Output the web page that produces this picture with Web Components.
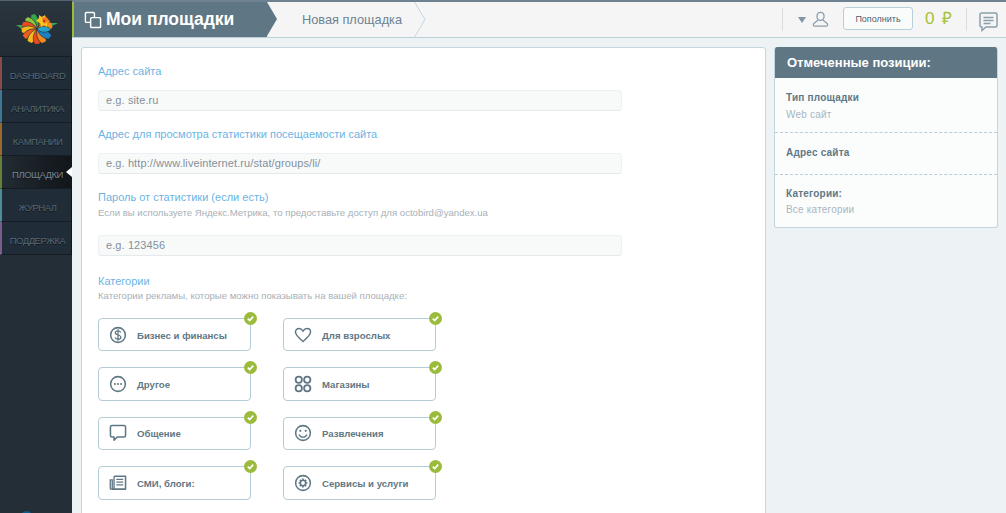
<!DOCTYPE html>
<html><head><meta charset="utf-8">
<style>
html,body{margin:0;padding:0;height:513px;overflow:hidden;background:#edf2f5;font-family:"Liberation Sans",Arial,sans-serif}
</style></head><body>
<app-shell>
 <side-nav slot="nav">
  <nav-item c="#8a4a45">DASHBOARD</nav-item>
  <nav-item c="#3f7794">АНАЛИТИКА</nav-item>
  <nav-item c="#9a6a2c">КАМПАНИИ</nav-item>
  <nav-item c="#65803a" active>ПЛОЩАДКИ</nav-item>
  <nav-item c="#4f8e99">ЖУРНАЛ</nav-item>
  <nav-item c="#7a5f8e">ПОДДЕРЖКА</nav-item>
 </side-nav>
 <top-bar slot="top"></top-bar>
 <form-card slot="main">
  <form-field label="Адрес сайта" ph="e.g. site.ru" g="12"></form-field>
  <form-field label="Адрес для просмотра статистики посещаемости сайта" ph="e.g. http://www.liveinternet.ru/stat/groups/li/" g="12" t="16"></form-field>
  <form-field label="Пароль от статистики (если есть)" hint="Если вы используете Яндекс.Метрика, то предоставьте доступ для octobird@yandex.ua" ph="e.g. 123456" g="16" t="16"></form-field>
  <form-field label="Категории" hint="Категории рекламы, которые можно показывать на вашей площадке:" t="18" hm="2"></form-field>
  <cat-grid>
   <cat-card icon="dollar">Бизнес и финансы</cat-card>
   <cat-card icon="heart">Для взрослых</cat-card>
   <cat-card icon="dots">Другое</cat-card>
   <cat-card icon="rings">Магазины</cat-card>
   <cat-card icon="chat">Общение</cat-card>
   <cat-card icon="smile">Развлечения</cat-card>
   <cat-card icon="news">СМИ, блоги:</cat-card>
   <cat-card icon="gear">Сервисы и услуги</cat-card>
  </cat-grid>
 </form-card>
 <side-panel slot="aside">
  <panel-row title="Тип площадки" value="Web сайт" h="55" p="14"></panel-row>
  <panel-row title="Адрес сайта" h="42" p="14"></panel-row>
  <panel-row title="Категории:" value="Все категории" h="53" p="13" last></panel-row>
 </side-panel>
</app-shell>
<script>
const def=(n,html)=>customElements.define(n,class extends HTMLElement{
 connectedCallback(){ if(this.shadowRoot) return; const r=this.attachShadow({mode:'open'}); r.innerHTML=typeof html==='function'?html(this):html; }
});
const ICONS={
 dollar:'<circle cx="10" cy="10" r="8.2" fill="none" stroke="#5f7784" stroke-width="1.7"/><path d="M13 7.2C12.5 5.8 11.3 5.3 10 5.3 8.2 5.3 7 6.2 7 7.6c0 3.2 6.2 1.6 6.2 4.9 0 1.4-1.4 2.3-3.2 2.3-1.6 0-2.9-.7-3.3-2.1M10 3.6v12.8" fill="none" stroke="#5f7784" stroke-width="1.4"/>',
 heart:'<path d="M10 17.2C5 13 1.6 10.3 1.6 6.8 1.6 4.4 3.4 2.8 5.5 2.8 7.4 2.8 9 3.9 10 5.6 11 3.9 12.6 2.8 14.5 2.8c2.1 0 3.9 1.6 3.9 4 0 3.5-3.4 6.2-8.4 10.4z" fill="none" stroke="#5f7784" stroke-width="1.6"/>',
 dots:'<circle cx="10" cy="10" r="8.2" fill="none" stroke="#5f7784" stroke-width="1.7"/><circle cx="6.6" cy="10" r="1.1" fill="#5f7784"/><circle cx="10" cy="10" r="1.1" fill="#5f7784"/><circle cx="13.4" cy="10" r="1.1" fill="#5f7784"/>',
 rings:'<g fill="none" stroke="#5f7784" stroke-width="2"><circle cx="5.3" cy="5.3" r="3.5"/><circle cx="14.7" cy="5.3" r="3.5"/><circle cx="5.3" cy="14.7" r="3.5"/><circle cx="14.7" cy="14.7" r="3.5"/></g>',
 chat:'<path d="M3.2 1.6h13.6c1 0 1.6.7 1.6 1.6v9.6c0 1-.7 1.6-1.6 1.6H9.2L5.6 18v-3.6H3.2c-1 0-1.6-.7-1.6-1.6V3.2c0-1 .7-1.6 1.6-1.6z" fill="none" stroke="#5f7784" stroke-width="1.7" stroke-linejoin="round"/>',
 smile:'<circle cx="10" cy="10" r="8.2" fill="none" stroke="#5f7784" stroke-width="1.7"/><circle cx="7" cy="7.6" r="1.2" fill="#5f7784"/><circle cx="13" cy="7.6" r="1.2" fill="#5f7784"/><path d="M5.6 11.6c.8 2 2.4 3 4.4 3s3.6-1 4.4-3" fill="none" stroke="#5f7784" stroke-width="1.5"/>',
 news:'<path d="M5.6 2.4h12.8v14.4H3.2" fill="none" stroke="#5f7784" stroke-width="1.7" stroke-linejoin="round"/><path d="M5.6 2.4v14.4M1.4 6.6h2.2v10.2H2.4c-.6 0-1-.4-1-1z" fill="none" stroke="#5f7784" stroke-width="1.5"/><path d="M8.2 6h7.6M8.2 9h7.6M8.2 12h7.6" stroke="#5f7784" stroke-width="1.4"/>',
 gear:'<circle cx="10" cy="10" r="8.2" fill="none" stroke="#5f7784" stroke-width="1.7"/><circle cx="10" cy="10" r="3" fill="none" stroke="#5f7784" stroke-width="1.8"/><path d="M10 5v1.6M10 13.4V15M5 10h1.6M13.4 10H15M6.5 6.5l1.1 1.1M12.4 12.4l1.1 1.1M13.5 6.5l-1.1 1.1M7.6 12.4l-1.1 1.1" stroke="#5f7784" stroke-width="1.8"/>'
};
const leaf=(a,c,l=19,w=6)=>`<path transform="translate(21 16) rotate(${a})" d="M0 0C${w} -${l*.3} ${w} -${l*.7} 0 -${l}C-${w} -${l*.7} -${w} -${l*.3} 0 0z" fill="${c}" stroke="#232e37" stroke-width=".6"/>`;
def('app-shell',`<style>:host{display:grid;grid-template-columns:72px 1fr 232px;grid-template-rows:38px 475px;width:1006px;height:513px;overflow:hidden}
 ::slotted([slot=nav]){grid-row:1/3;grid-column:1}::slotted([slot=top]){grid-column:2/4;grid-row:1}
 ::slotted([slot=main]){grid-column:2;grid-row:2;margin:9px 8px 0 9px}::slotted([slot=aside]){grid-column:3;grid-row:2;margin:9px 8px 0 0}</style>
 <slot name="nav"></slot><slot name="top"></slot><slot name="main"></slot><slot name="aside"></slot>`);
def('side-nav',`<style>:host{display:block;background:#232e37;position:relative;height:513px;border-top:1px solid #55636e;box-sizing:border-box}
 .logo{height:56px;display:flex;align-items:center;justify-content:center;background:linear-gradient(#2a353e,#222c35);border-bottom:1px solid #151c22;box-sizing:border-box}
 .list{display:flex;flex-direction:column;border-right:1px solid #11171c}
 .blip{position:absolute;left:20px;top:510px;width:13px;height:13px;border-radius:50%;background:#0c5c8e}</style>
 <div class="logo"><svg width="42" height="32" viewBox="0 0 42 32" style="margin-left:1px">
  <defs><clipPath id="r"><ellipse cx="21" cy="16" rx="15.500" ry="15"/></clipPath></defs>
  <path d="M0 12h9l-3 4zM42 10H31l3 4z" fill="#3aa655"/>
  <g clip-path="url(#r)">
   ${leaf(40,'#e9491f')}${leaf(75,'#f28a1c')}${leaf(-15,'#35a64a',18,5)}${leaf(-45,'#8ec63f',18,5)}
   ${leaf(-70,'#e9491f',19,5)}${leaf(-95,'#f2b81c',19,5)}${leaf(-122,'#ee5a24',19,5)}
   ${leaf(-150,'#f2b81c',19,5)}${leaf(180,'#e9491f',19,5)}${leaf(152,'#f28a1c',19,5)}
   ${leaf(122,'#1e7fc2',19,5)}${leaf(92,'#29a4c9',14,4)}
  </g>
  <path d="M23 2l3 2 3-2 1 4 4 2-3 2 0 4-3-2-3 2-1-4-4-2 3-3z" fill="#f4c61f"/>
  <path d="M26 5l4-1 3 4-5 3z" fill="#ef7d1e"/>
  <circle cx="28" cy="8" r="1.300" fill="#c8301f"/>
 </svg></div>
 <div class="list"><slot></slot></div><div class="blip"></div>`);
def('nav-item',h=>`<style>:host{display:flex;height:33px;box-sizing:border-box;border-bottom:1px solid #151c22;border-left:2px solid ${h.getAttribute('c')};
  background:${h.hasAttribute('active')?'linear-gradient(90deg,#232c33,#141a1f 75%,#12171c)':'#202d38'};position:relative;
  align-items:center;justify-content:center;font-size:9.500px;letter-spacing:-.5px;color:${h.hasAttribute('active')?'#76838d':'#566875'};text-shadow:0 1px 0 #10161b;padding:5px 0 0 2px}
 i{position:absolute;right:-1px;top:11px;width:0;height:0;border:5px solid transparent;border-right:6px solid #fff;border-left:0}</style>
 <slot></slot>${h.hasAttribute('active')?'<i></i>':''}`);
def('top-bar',`<style>:host{display:flex;align-items:stretch;height:38px;box-sizing:border-box;border-top:2px solid #6e8292;border-bottom:1px solid #b9ced9;background:#f5f5f5;color:#5f7784}
 .title{display:flex;align-items:center;gap:4px;background:#5f7784;border-left:2px solid #9bbb3c;padding-left:10px;width:183px;color:#fff;font-weight:bold;font-size:17.500px;position:relative;white-space:nowrap;flex:none}
 .title::after{content:"";position:absolute;left:100%;top:0;border-style:solid;border-width:17.500px 0 17.500px 10px;border-color:transparent transparent transparent #5f7784}
 .crumb{display:flex;align-items:center;margin-left:35px;width:112px;font-size:12.750px;position:relative;color:#6c8494;white-space:nowrap;flex:none}
 .sep{flex:none}
 .spacer{flex:1}
 .v{width:1px;background:#dcdfe1;margin:6px 0}
 .tri{width:0;height:0;border:4px solid transparent;border-top:6px solid #8295a2;border-bottom:0;margin:15px 0 0 15px}
 .btn{align-self:center;margin:-2px 0 0 14px;width:70px;height:23px;box-sizing:border-box;border:1px solid #b9ced9;border-radius:3px;background:#fafbfb;font-size:9px;color:#4e5f6b;display:flex;align-items:center;justify-content:center}
 .bal{font-size:17px;color:#a6c13a;margin:-4px 0 0 12px;align-self:center;letter-spacing:1.500px;width:41px;white-space:nowrap}
 </style>
 <div class="title"><svg width="18" height="18" viewBox="0 0 19 19" fill="none" stroke="#fff" stroke-width="1.500"><path d="M7 12H2.500a1 1 0 0 1-1-1V2.500a1 1 0 0 1 1-1H10a1 1 0 0 1 1 1V7"/><rect x="7" y="7" width="10.500" height="10.500" rx="1.200"/></svg><span>Мои площадки</span></div>
 <div class="crumb">Новая площадка</div>
 <svg class="sep" width="12" height="35" viewBox="0 0 12 35"><path d="M.5 0 11 17.500.5 35" fill="none" stroke="#c3d5df"/></svg>
 <div class="spacer"></div>
 <div class="v"></div>
 <div class="tri"></div>
 <svg width="17" height="16" viewBox="0 0 19 18" style="margin:9px 0 0 6px" fill="none" stroke="#8b9eab" stroke-width="1.400"><path d="M9.500 1.500c2.500 0 4 2 4 4.500 0 2.400-1.400 4.600-4 4.600S5.500 8.400 5.500 6c0-2.500 1.500-4.500 4-4.500z"/><path d="M6.500 10.500 2 14c-.8.700-.8 3 .5 3h14c1.300 0 1.300-2.300.5-3l-4.500-3.500"/></svg>
 <div class="btn">Пополнить</div>
 <div class="bal">0 ₽</div>
 <div class="v"></div>
 <svg width="19" height="20" viewBox="0 0 19 20" style="margin:10px 8px 0 12px" fill="none" stroke="#8b9eab" stroke-width="1.500"><path d="M2.500 1h14c.9 0 1.500.6 1.500 1.500v11c0 .9-.6 1.500-1.500 1.500H7l-4 3.500V15h-.5C1.600 15 1 14.400 1 13.500v-11C1 1.600 1.600 1 2.500 1z"/><path d="M4.500 5.500h10M4.500 8.500h10M4.500 11.500h7" stroke-width="1.300"/></svg>`);
def('form-card',`<style>:host{display:block;box-sizing:border-box;height:480px;background:#fff;border:1px solid #c5d6de;border-radius:3px;padding:16px 16px;color:#6bb3e0}</style><slot></slot>`);
def('form-field',h=>{const a=n=>h.getAttribute(n);return `<style>:host{display:block;margin-top:${a('t')||0}px}
 .l{font-size:11px;line-height:14px;color:#6cb4e4}
 .h{font-size:9.600px;line-height:12px;margin-top:${a('hm')||3}px;color:#a7b1b8}
 .i{height:21px;box-sizing:border-box;width:524px;margin-top:${a('g')||0}px;background:#f8fafa;border:1px solid #eef1f3;border-bottom-color:#e4e9ec;border-radius:3px;font-size:11px;line-height:19px;padding-left:7px;color:#84909a;letter-spacing:.1px}</style>
 <div class="l">${a('label')}</div>${a('hint')?`<div class="h">${a('hint')}</div>`:''}${a('ph')?`<div class="i">${a('ph')}</div>`:''}`});
def('cat-grid',`<style>:host{display:grid;grid-template-columns:153px 153px;column-gap:32px;row-gap:16px;grid-auto-rows:33.400px;margin-top:16px}</style><slot></slot>`);
def('cat-card',h=>`<style>:host{display:flex;align-items:center;box-sizing:border-box;position:relative;border:1px solid #b4ccd8;border-radius:4px;background:#fff;font-size:9.600px;font-weight:bold;color:#5f7784;padding-left:10px;gap:10px;white-space:nowrap}
 svg.m{flex:none}
 slot{display:block;padding-top:1px}
 .ck{position:absolute;right:-7px;top:-7px;width:13px;height:13px;border-radius:50%;background:#9bbb3c;display:flex;align-items:center;justify-content:center}</style>
 <svg class="m" width="18" height="18" viewBox="0 0 20 20">${ICONS[h.getAttribute('icon')]}</svg><slot></slot>
 <span class="ck"><svg width="9" height="9" viewBox="0 0 9 9"><path d="M1.800 4.600 3.700 6.500 7.200 2.600" fill="none" stroke="#fff" stroke-width="1.700"/></svg></span>`);
def('side-panel',`<style>:host{display:block;box-sizing:border-box;height:181px;width:224px;background:#fbfdfd;border:1px solid #c5d6de;border-top:0;border-radius:3px;overflow:hidden}
 .h{height:31px;background:#5f7784;margin:0 -1px;color:#fff;font-size:13px;font-weight:bold;line-height:31px;padding-left:13px}</style>
 <div class="h">Отмеченные позиции:</div><slot></slot>`);
def('panel-row',h=>{const a=n=>h.getAttribute(n);return `<style>:host{display:block;box-sizing:border-box;height:${a('h')}px;padding:${a('p')}px 11px 0;${h.hasAttribute('last')?'':'border-bottom:1px dashed #b9ced9'}}
 .t{font-size:10px;line-height:11px;font-weight:bold;color:#5f7784;letter-spacing:.2px}.v{font-size:10px;line-height:11px;margin-top:${h.hasAttribute('last')?5:6}px;color:#a9b6bf;letter-spacing:.2px}</style>
 <div class="t">${a('title')}</div>${a('value')?`<div class="v">${a('value')}</div>`:''}`});
</script>
</body></html>
